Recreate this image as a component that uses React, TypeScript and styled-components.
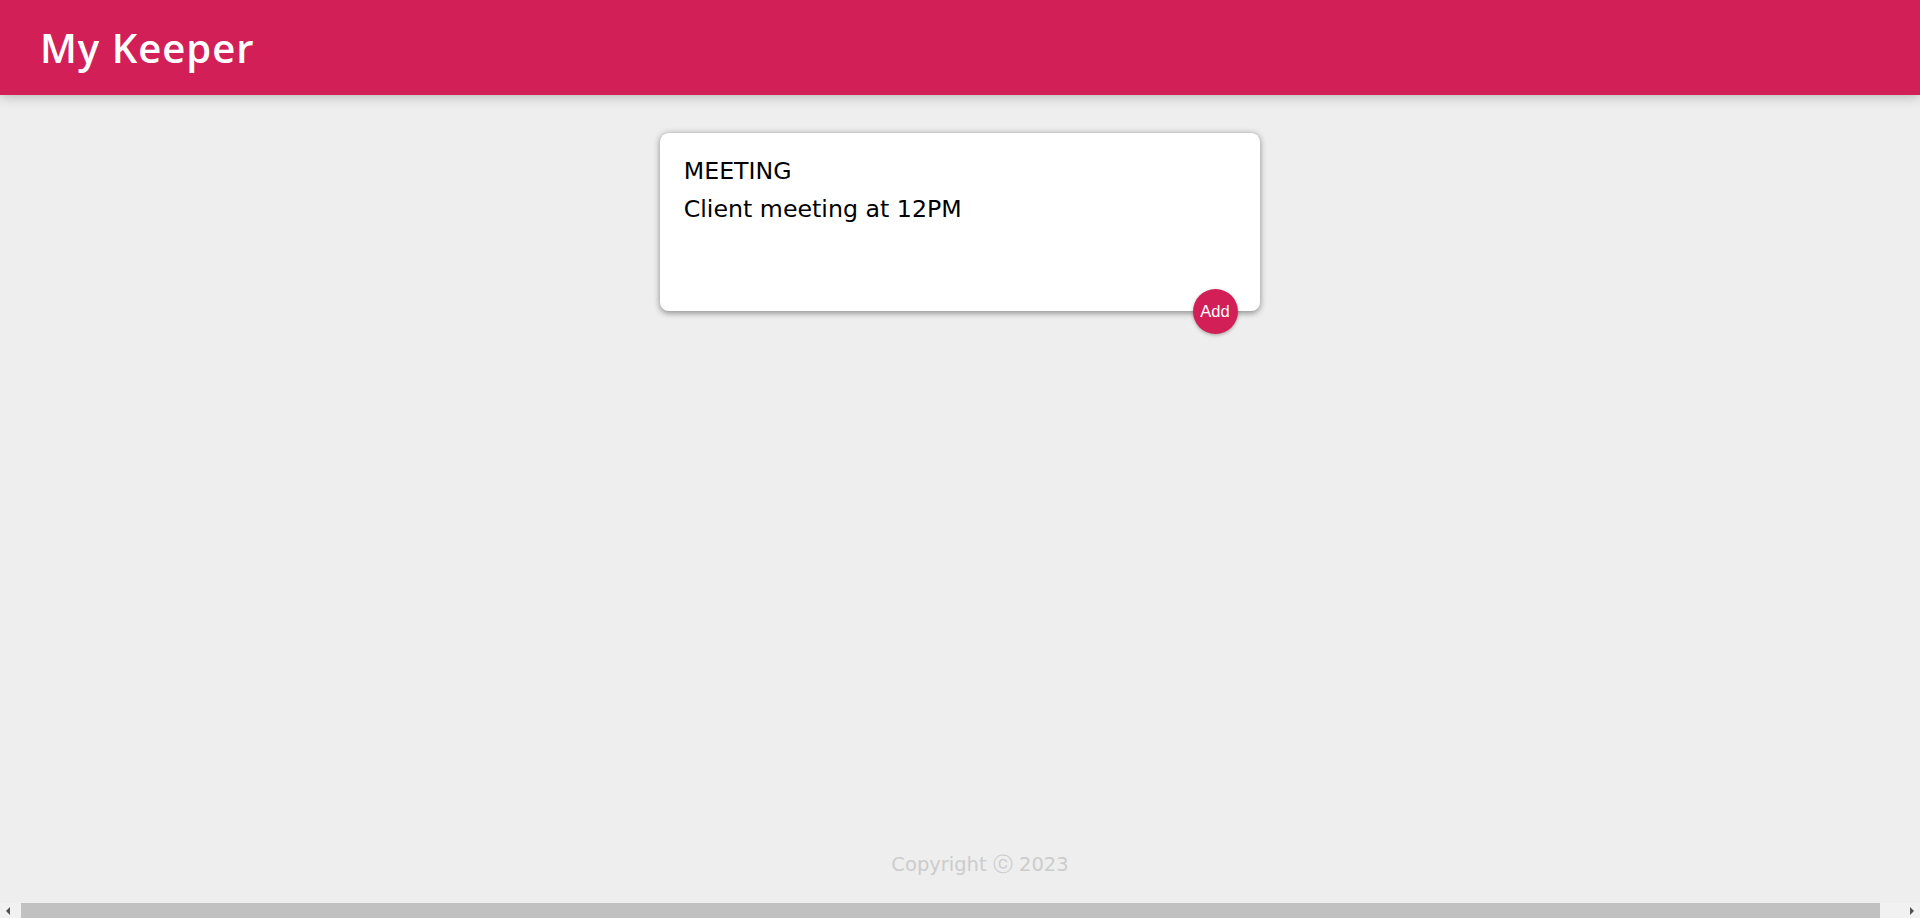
import React from "react";
import styled, { createGlobalStyle } from "styled-components";

const GlobalStyle = createGlobalStyle`
  * { margin: 0; padding: 0; box-sizing: border-box; }
  html, body, #root { height: 100%; }
  html { font-family: "DejaVu Sans", "Liberation Sans", sans-serif; }
  body {
    background: #eeeeee;
    overflow: hidden;
  }
  #root {
    display: flex;
    flex-direction: column;
  }
`;

const Header = styled.header`
  background-color: #d21f57;
  padding: 20px 40px;
  box-shadow: 0 0 12.5px 0 rgba(0, 0, 0, 0.3);
  position: relative;
  z-index: 1;
`;

const Title = styled.h1`
  color: #ffffff;
  font-family: "Open Sans", "DejaVu Sans", sans-serif;
  font-weight: 600;
  font-size: 40px;
  line-height: 55px;
  letter-spacing: 1px;
`;

const Main = styled.main`
  flex: 1;
  padding: 0 20px;
`;

const NoteForm = styled.form`
  position: relative;
  width: 600px;
  margin: 37.5px auto 25px auto;
  background: #ffffff;
  padding: 18.75px;
  border-radius: 8.75px;
  box-shadow: 0 1.25px 6.25px rgb(138, 137, 137);
`;

const TitleInput = styled.input`
  display: block;
  width: 100%;
  border: none;
  outline: none;
  padding: 5px;
  font-family: inherit;
  font-size: 23.7px;
  line-height: 29px;
  height: 39px;
  color: #000000;
  background: transparent;
`;

const BodyInput = styled.textarea`
  display: block;
  width: 100%;
  border: none;
  outline: none;
  padding: 5px;
  font-family: inherit;
  font-size: 23.7px;
  line-height: 29px;
  height: 102px;
  color: #000000;
  resize: none;
  background: transparent;
`;

const AddButton = styled.button`
  position: absolute;
  right: 22.5px;
  bottom: -22.5px;
  width: 45px;
  height: 45px;
  border: none;
  border-radius: 50%;
  background: #d21f57;
  color: #ffffff;
  font-family: "Liberation Sans", Arial, sans-serif;
  font-size: 16.5px;
  box-shadow: 0 1.25px 3.75px rgba(0, 0, 0, 0.3);
  cursor: pointer;
  outline: none;
`;

const Footer = styled.footer`
  height: 50px;
  padding-left: 40px;
  text-align: center;
  flex-shrink: 0;
`;

const FooterText = styled.p`
  color: #cccccc;
  font-size: 19.5px;
  line-height: 24px;
`;

const ScrollBar = styled.div`
  display: flex;
  height: 15px;
  flex-shrink: 0;
  background: #f1f1f1;
`;

const ScrollButton = styled.div`
  width: 15px;
  display: flex;
  align-items: center;
  justify-content: center;
  color: #505050;
`;

const ScrollTrack = styled.div`
  flex: 1;
  display: flex;
  padding: 0 25px 0 6px;
`;

const ScrollThumb = styled.div`
  flex: 1;
  background: #c1c1c1;
`;

function Arrow({ dir }: { dir: "left" | "right" }) {
  return (
    <svg width="5" height="8" viewBox="0 0 5 8">
      {dir === "left" ? (
        <polygon points="5,0 5,8 1,4" fill="currentColor" />
      ) : (
        <polygon points="0,0 0,8 4,4" fill="currentColor" />
      )}
    </svg>
  );
}

export default function App() {
  return (
    <>
      <GlobalStyle />
      <Header>
        <Title>My Keeper</Title>
      </Header>
      <Main>
        <NoteForm onSubmit={(e) => e.preventDefault()}>
          <TitleInput name="title" defaultValue="MEETING" />
          <BodyInput name="content" rows={3} defaultValue="Client meeting at 12PM" />
          <AddButton type="submit">Add</AddButton>
        </NoteForm>
      </Main>
      <Footer>
        <FooterText>Copyright ⓒ 2023</FooterText>
      </Footer>
      <ScrollBar>
        <ScrollButton>
          <Arrow dir="left" />
        </ScrollButton>
        <ScrollTrack>
          <ScrollThumb />
        </ScrollTrack>
        <ScrollButton>
          <Arrow dir="right" />
        </ScrollButton>
      </ScrollBar>
    </>
  );
}
